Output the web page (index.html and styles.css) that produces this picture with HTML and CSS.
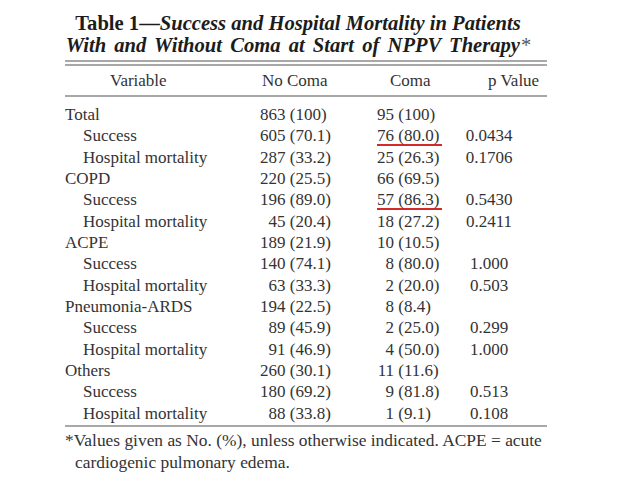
FILE: index.html
```html
<!DOCTYPE html>
<html>
<head>
<meta charset="utf-8">
<link rel="stylesheet" href="styles.css">
</head>
<body>
<div class="page">
  <h1 class="title"><span class="up">Table 1—</span><em>Success and Hospital Mortality in Patients</em><br><span class="line2"><em>With and Without Coma at Start of NPPV Therapy</em><span class="star">*</span></span></h1>
  <div class="table">
    <div class="double-rule"></div>
    <div class="head">
      <div class="h1">Variable</div>
      <div class="h2">No Coma</div>
      <div class="h3">Coma</div>
      <div class="h4">p Value</div>
    </div>
    <div class="body">
      <div class="row"><div class="var">Total</div><div class="c2"><span class="n">863</span> (100)</div><div class="c3"><span class="n">95</span> (100)</div><div class="c4"></div></div>
      <div class="row"><div class="var sub">Success</div><div class="c2"><span class="n">605</span> (70.1)</div><div class="c3"><span class="ul">76 (80.0)</span></div><div class="c4">0.0434</div></div>
      <div class="row"><div class="var sub">Hospital mortality</div><div class="c2"><span class="n">287</span> (33.2)</div><div class="c3"><span class="n">25</span> (26.3)</div><div class="c4">0.1706</div></div>
      <div class="row"><div class="var">COPD</div><div class="c2"><span class="n">220</span> (25.5)</div><div class="c3"><span class="n">66</span> (69.5)</div><div class="c4"></div></div>
      <div class="row"><div class="var sub">Success</div><div class="c2"><span class="n">196</span> (89.0)</div><div class="c3"><span class="ul">57 (86.3)</span></div><div class="c4">0.5430</div></div>
      <div class="row"><div class="var sub">Hospital mortality</div><div class="c2"><span class="n">45</span> (20.4)</div><div class="c3"><span class="n">18</span> (27.2)</div><div class="c4">0.2411</div></div>
      <div class="row"><div class="var">ACPE</div><div class="c2"><span class="n">189</span> (21.9)</div><div class="c3"><span class="n">10</span> (10.5)</div><div class="c4"></div></div>
      <div class="row"><div class="var sub">Success</div><div class="c2"><span class="n">140</span> (74.1)</div><div class="c3"><span class="n">8</span> (80.0)</div><div class="c4">1.000</div></div>
      <div class="row"><div class="var sub">Hospital mortality</div><div class="c2"><span class="n">63</span> (33.3)</div><div class="c3"><span class="n">2</span> (20.0)</div><div class="c4">0.503</div></div>
      <div class="row"><div class="var">Pneumonia-ARDS</div><div class="c2"><span class="n">194</span> (22.5)</div><div class="c3"><span class="n">8</span> (8.4)</div><div class="c4"></div></div>
      <div class="row"><div class="var sub">Success</div><div class="c2"><span class="n">89</span> (45.9)</div><div class="c3"><span class="n">2</span> (25.0)</div><div class="c4">0.299</div></div>
      <div class="row"><div class="var sub">Hospital mortality</div><div class="c2"><span class="n">91</span> (46.9)</div><div class="c3"><span class="n">4</span> (50.0)</div><div class="c4">1.000</div></div>
      <div class="row"><div class="var">Others</div><div class="c2"><span class="n">260</span> (30.1)</div><div class="c3"><span class="n">11</span> (11.6)</div><div class="c4"></div></div>
      <div class="row"><div class="var sub">Success</div><div class="c2"><span class="n">180</span> (69.2)</div><div class="c3"><span class="n">9</span> (81.8)</div><div class="c4">0.513</div></div>
      <div class="row"><div class="var sub">Hospital mortality</div><div class="c2"><span class="n">88</span> (33.8)</div><div class="c3"><span class="n">1</span> (9.1)</div><div class="c4">0.108</div></div>
    </div>
    <div class="foot">*Values given as No. (%), unless otherwise indicated. ACPE = acute cardiogenic pulmonary edema.</div>
  </div>
</div>
</body>
</html>
```
FILE: styles.css
```css
html, body {
  margin: 0;
  padding: 0;
  background: #ffffff;
}
body {
  width: 638px;
  height: 479px;
  overflow: hidden;
  font-family: "Liberation Serif", "DejaVu Serif", serif;
  color: #333333;
}
.page {
  padding-top: 12px;
  padding-left: 65px;
}
.title {
  margin: 0 0 0 -15px;
  width: 496px;
  text-align: center;
  font-size: 20.6px;
  line-height: 22px;
  font-weight: bold;
  white-space: nowrap;
  color: #1c1c1c;
}
.title em {
  font-style: italic;
}
.title .line2 {
  word-spacing: 3px;
}
.title .star {
  font-weight: normal;
  font-style: italic;
  color: #555;
}
.table {
  width: 482px;
  margin-top: 4px;
}
.double-rule {
  height: 2px;
  border-top: 2px solid #a8a8a8;
  border-bottom: 2px solid #a8a8a8;
}
.head {
  display: grid;
  grid-template-columns: 185px 110px 81px 106px;
  font-size: 17px;
  height: 29px;
  line-height: 29px;
  border-bottom: 2px solid #a8a8a8;
}
.h1 { padding-left: 45px; }
.h2 { padding-left: 12px; }
.h3 { padding-left: 30px; }
.h4 { padding-left: 47px; }
.body {
  padding-top: 7px;
  padding-bottom: 1px;
  border-bottom: 2px solid #a8a8a8;
}
.row {
  display: grid;
  grid-template-columns: 185px 110px 81px 106px;
  font-size: 17px;
  line-height: 21.35px;
  height: 21.35px;
  white-space: nowrap;
}
.var.sub {
  padding-left: 18px;
}
.c2 .n {
  display: inline-block;
  width: 35.5px;
  text-align: right;
}
.c3 .n {
  display: inline-block;
  width: 34px;
  text-align: right;
}
.c3 .ul {
  display: inline-block;
  margin-left: 17px;
  padding-right: 3px;
  line-height: 17px;
  border-bottom: 2px solid #d42a2a;
}
.c4 {
  text-align: center;
  padding-right: 10px;
}
.foot {
  font-size: 17.4px;
  line-height: 22px;
  padding-top: 2px;
  padding-left: 10px;
  text-indent: -10px;
}
```
